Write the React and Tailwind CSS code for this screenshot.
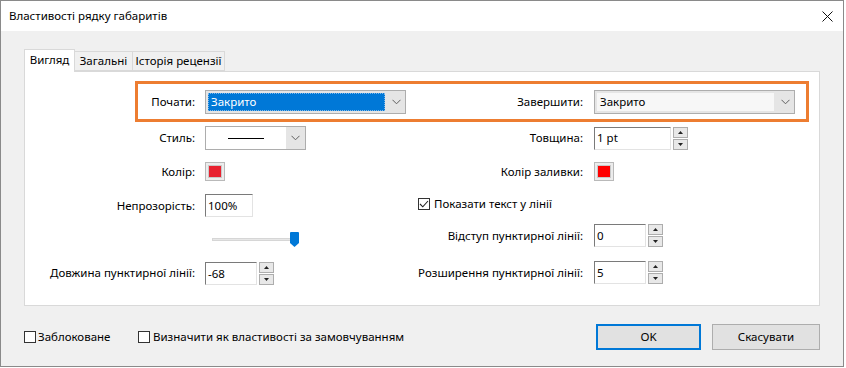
import React from 'react';

function Chevron() {
  return (
    <svg width="9" height="6" viewBox="0 0 9 6" className="text-[#606060]">
      <path d="M0.5 0.8 L4.5 4.8 L8.5 0.8" fill="none" stroke="currentColor" strokeWidth="1" />
    </svg>
  );
}

function Select({ value, focused = false, width = 'w-[201px]' }) {
  return (
    <div className={`${width} h-[24px] flex border border-[#adadad] bg-[#e5e5e5]`}>
      <div className="flex-1 p-[2px] flex">
        {focused ? (
          <div className="flex-1 bg-[#0078d7] text-white border border-dotted border-[#7fb7e8] flex items-center pl-[2px]">
            {value}
          </div>
        ) : (
          <div className="flex-1 bg-[#f7f7f7] flex items-center pl-[3px]">{value}</div>
        )}
      </div>
      <div className="w-[18px] flex items-center justify-center">
        <Chevron />
      </div>
    </div>
  );
}

function StyleCombo() {
  return (
    <div className="w-[101px] h-[24px] flex border border-[#adadad] bg-[#e5e5e5]">
      <div className="w-[80px] bg-white flex items-center justify-center">
        <div className="w-[36px] h-px bg-black" />
      </div>
      <div className="flex-1 flex items-center justify-center">
        <Chevron />
      </div>
    </div>
  );
}

function Field({ value, width }) {
  return (
    <div
      className={`${width} h-[23px] bg-white border border-t-[#7a7a7a] border-l-[#7a7a7a] border-r-[#e3e3e3] border-b-[#e3e3e3] flex items-center pl-[2px]`}
    >
      {value}
    </div>
  );
}

function Spinner() {
  return (
    <div className="ml-[2px] w-[15px] h-[23px] flex flex-col gap-px">
      <div className="flex-1 border border-[#adadad] bg-[#e8e8e8] flex items-center justify-center">
        <svg width="5" height="3" viewBox="0 0 5 3">
          <path d="M0 3 L2.5 0 L5 3 Z" fill="#222" />
        </svg>
      </div>
      <div className="flex-1 border border-[#adadad] bg-[#e8e8e8] flex items-center justify-center">
        <svg width="5" height="3" viewBox="0 0 5 3">
          <path d="M0 0 L2.5 3 L5 0 Z" fill="#222" />
        </svg>
      </div>
    </div>
  );
}

function Swatch({ color }) {
  return (
    <div className="w-[20px] h-[19px] border border-[#b9b9b9] bg-[#ececec] p-[2px]">
      <div className={`w-full h-full ${color} border border-[#c9c9c9]`} />
    </div>
  );
}

function Check({ checked = false }) {
  return (
    <div className="w-[12px] h-[12px] border border-[#333] bg-white flex items-center justify-center">
      {checked && (
        <svg width="10" height="8" viewBox="0 0 10 8">
          <path d="M1 4 L3.8 6.8 L9 1" fill="none" stroke="#222" strokeWidth="1.1" />
        </svg>
      )}
    </div>
  );
}

function Row({ className = '', left, leftCtl, right, rightCtl, rightFull }) {
  return (
    <div className={`flex items-center h-[23px] ${className}`}>
      <div className="w-[170px] text-right">{left}</div>
      <div className="w-[211px] pl-[10px] flex items-center">{leftCtl}</div>
      {rightFull ? (
        <div className="pl-[12px] flex items-center">{rightFull}</div>
      ) : (
        <>
          <div className="w-[177px] text-right">{right}</div>
          <div className="pl-[11px] flex items-center">{rightCtl}</div>
        </>
      )}
    </div>
  );
}

export default function App() {
  return (
    <div className="w-[846px] h-[368px] bg-white font-['Noto_Sans',sans-serif] text-[11.5px] text-black leading-none">
      <div className="w-[844px] h-[367px] border border-[#8a8a8a] flex flex-col">
        <div className="h-[30px] bg-white flex items-center justify-between pl-[8px] pr-[10px]">
          <span>Властивості рядку габаритів</span>
          <svg width="11" height="11" viewBox="0 0 11 11">
            <path d="M0.5 0.5 L10.5 10.5 M10.5 0.5 L0.5 10.5" stroke="#111" strokeWidth="1" />
          </svg>
        </div>

        <div className="flex-1 bg-[#f0f0f0] px-[23px] pt-[18px] flex flex-col">
          <div className="flex items-end h-[22px]">
            <div className="relative z-10 -mb-px h-[23px] w-[51px] bg-white border border-[#d9d9d9] border-b-0 flex items-start justify-center pt-[4px]">
              Вигляд
            </div>
            <div className="h-[20px] w-[59px] -ml-px border border-[#d9d9d9] bg-[#f0f0f0] flex items-center justify-center">
              Загальні
            </div>
            <div className="h-[20px] w-[93px] -ml-px border border-[#d9d9d9] bg-[#f0f0f0] flex items-center justify-center">
              Історія рецензії
            </div>
          </div>

          <div className="h-[235px] w-[796px] bg-white border border-[#d9d9d9] pt-[18px] flex flex-col">
            <div className="relative">
              <div className="absolute left-[110px] top-[-9px] w-[674px] h-[41px] border-[3px] border-[#ed7d31]" />
              <Row
                className="h-[24px]"
                left="Почати:"
                leftCtl={<Select value="Закрито" focused />}
                right="Завершити:"
                rightCtl={<Select value="Закрито" width="w-[201px]" />}
              />
            </div>
            <Row
              className="mt-[12px] h-[24px]"
              left="Стиль:"
              leftCtl={<StyleCombo />}
              right="Товщина:"
              rightCtl={
                <>
                  <Field value="1 pt" width="w-[77px]" />
                  <Spinner />
                </>
              }
            />
            <Row
              className="mt-[10px]"
              left="Колір:"
              leftCtl={<Swatch color="bg-[#e8212f]" />}
              right="Колір заливки:"
              rightCtl={<Swatch color="bg-[#ff0000]" />}
            />
            <Row
              className="mt-[11px]"
              left="Непрозорість:"
              leftCtl={<Field value="100%" width="w-[48px]" />}
              rightFull={
                <div className="flex items-center gap-[4px] -mt-[4px]">
                  <Check checked />
                  <span>Показати текст у лінії</span>
                </div>
              }
            />
            <Row
              className="mt-[7px]"
              left=""
              leftCtl={
                <div className="relative ml-[7px] w-[87px] h-[23px] mt-[4px]">
                  <div className="absolute left-0 right-0 top-[12px] h-[3px] bg-[#e7e7e7] border border-[#d6d6d6]" />
                  <svg className="absolute left-[78px] top-[6px]" width="9" height="15" viewBox="0 0 9 15">
                    <path d="M0 1 Q0 0 1 0 L8 0 Q9 0 9 1 L9 11 L4.5 15 L0 11 Z" fill="#0078d7" />
                  </svg>
                </div>
              }
              right="Відступ пунктирної лінії:"
              rightCtl={
                <>
                  <Field value="0" width="w-[52px]" />
                  <Spinner />
                </>
              }
            />
            <Row
              className="mt-[14px]"
              left="Довжина пунктирної лінії:"
              leftCtl={
                <div className="flex items-center mt-[2px]">
                  <Field value="-68" width="w-[52px]" />
                  <Spinner />
                </div>
              }
              right="Розширення пунктирної лінії:"
              rightCtl={
                <>
                  <Field value="5" width="w-[52px]" />
                  <Spinner />
                </>
              }
            />
          </div>

          <div className="mt-[18px] flex items-center h-[26px]">
            <div className="w-[114px] flex items-center gap-[2px]">
              <Check />
              <span>Заблоковане</span>
            </div>
            <div className="flex items-center gap-[3px]">
              <Check />
              <span>Визначити як властивості за замовчуванням</span>
            </div>
            <div className="ml-auto flex items-center gap-[11px]">
              <button className="w-[105px] h-[26px] bg-[#e1e1e1] border-2 border-[#0078d7]">OK</button>
              <button className="w-[108px] h-[26px] bg-[#e1e1e1] border border-[#adadad]">Скасувати</button>
            </div>
          </div>
        </div>
      </div>
    </div>
  );
}
